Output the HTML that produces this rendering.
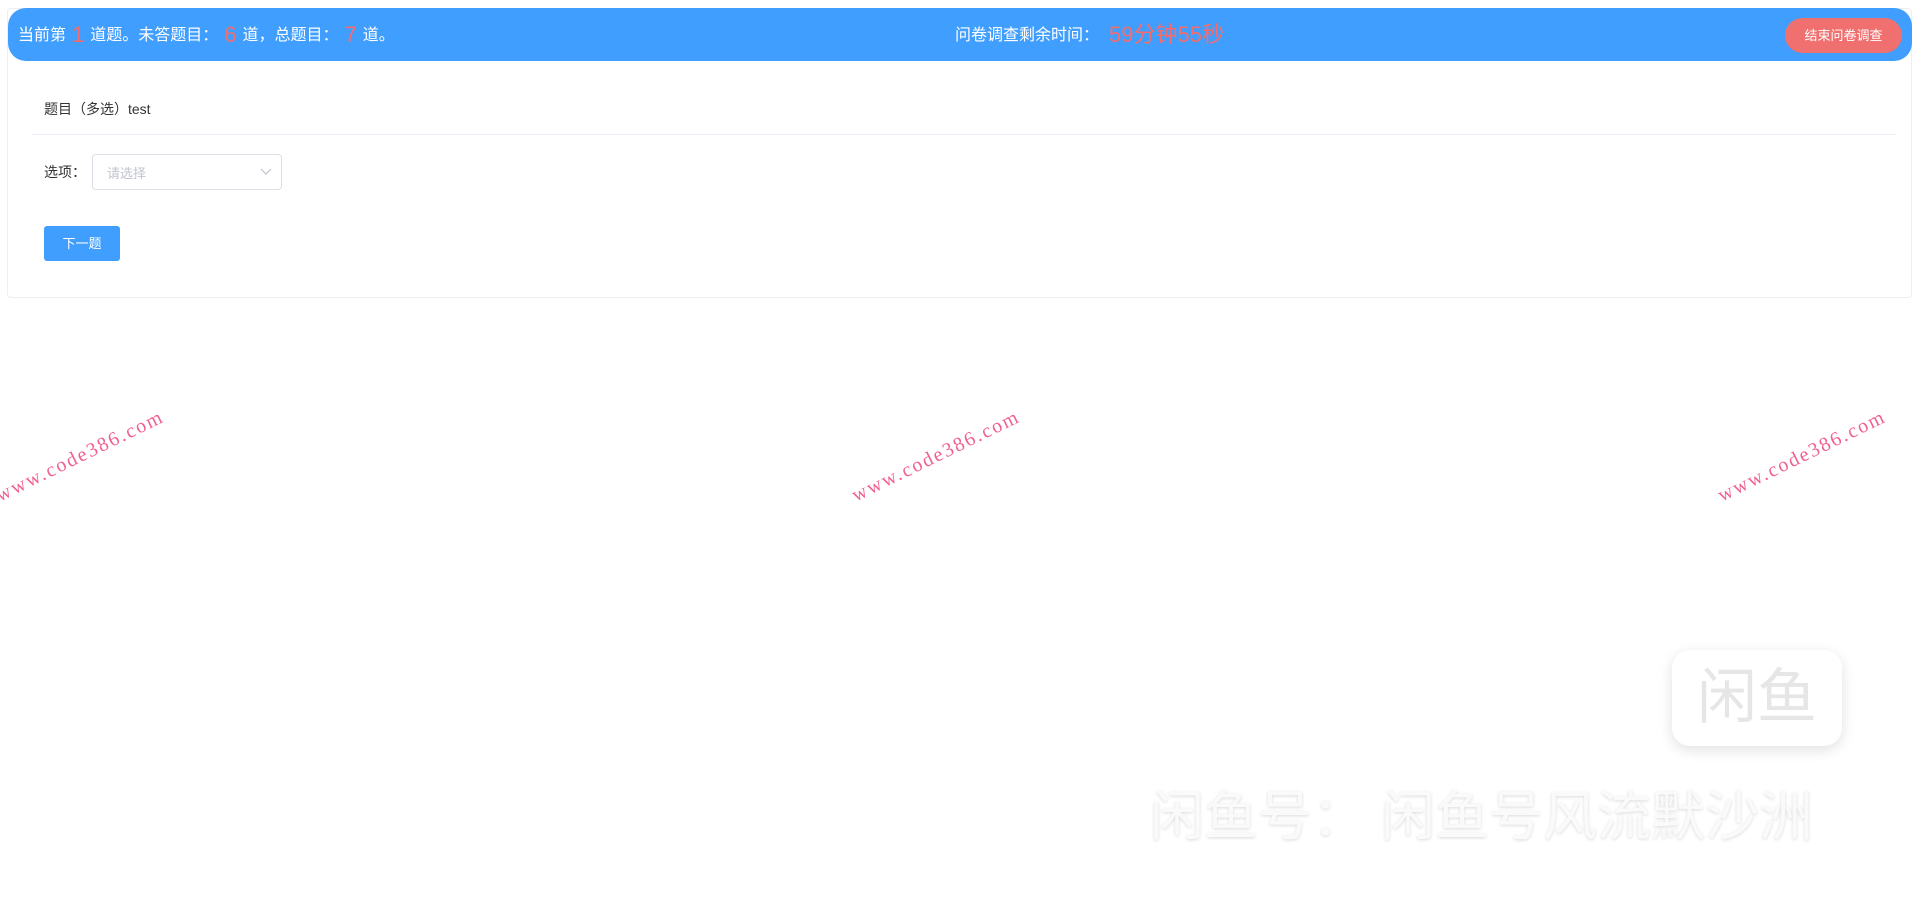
<!DOCTYPE html>
<html><head><meta charset="utf-8"><style>
body{margin:0;width:1920px;height:916px;background:#fff;position:relative;overflow:hidden;font-family:"Liberation Sans","Noto Sans CJK SC",sans-serif;}
.card{position:absolute;left:7px;top:8px;width:1905px;height:290px;border:1px solid #eceff0;border-radius:4px;box-sizing:border-box;}
.head{position:absolute;left:8px;top:8px;width:1904px;height:53px;background:#409eff;border-radius:18px;color:#fff;font-size:16px;}
.head .l{position:absolute;left:10px;top:16px;line-height:22px;}
.r{color:#f56c6c;font-size:22px;margin:0 6px;vertical-align:-2px;}
.head .m{position:absolute;left:947px;top:16px;line-height:22px;}
.btnr{position:absolute;left:1777px;top:10px;width:117px;height:35px;border-radius:18px;background:#f07070;font-size:13px;text-align:center;line-height:35px;}
.q{position:absolute;left:44px;top:99px;font-size:14px;color:#333;}
.hr{position:absolute;left:32px;top:134px;width:1864px;height:1px;background:#ebeef5;}
.lab{position:absolute;left:44px;top:162px;font-size:14px;color:#333;}
.sel{position:absolute;left:92px;top:154px;width:190px;height:36px;border:1px solid #dcdfe6;border-radius:4px;box-sizing:border-box;font-size:13px;color:#c0c4cc;padding:8px 14px;}
.sel svg{position:absolute;right:9px;top:13px;}
.next{position:absolute;left:44px;top:226px;width:76px;height:35px;background:#409eff;border-radius:3px;color:#fff;font-size:13px;text-align:center;line-height:35px;}
.wm{position:absolute;color:#f06090;font-family:"Liberation Serif",serif;font-size:20px;letter-spacing:2px;transform:rotate(-26deg);white-space:nowrap;}
.logo{position:absolute;left:1672px;top:650px;width:170px;height:96px;border-radius:18px;background:#fff;box-shadow:0 4px 14px rgba(0,0,0,.12);font-size:60px;color:#e6e6e6;text-align:center;line-height:96px;}
.xy{position:absolute;left:1150px;top:772px;font-size:54px;color:#fafafa;text-shadow:0 1px 3px rgba(0,0,0,.15);white-space:nowrap;}
</style></head><body>
<div class="card"></div>
<div class="head">
<div class="l">当前第<span class="r">1</span>道题。未答题目：<span class="r">6</span>道，总题目：<span class="r">7</span>道。</div>
<div class="m">问卷调查剩余时间：<span class="r" style="margin-left:10px">59分钟55秒</span></div>
<div class="btnr">结束问卷调查</div>
</div>
<div class="q">题目（多选）test</div>
<div class="hr"></div>
<div class="lab">选项：</div>
<div class="sel">请选择<svg width="12" height="8" viewBox="0 0 12 8"><path d="M1 1l5 5 5-5" fill="none" stroke="#c0c4cc" stroke-width="1.2"/></svg></div>
<div class="next">下一题</div>
<div class="wm" style="left:-12px;top:445px">www.code386.com</div>
<div class="wm" style="left:844px;top:445px">www.code386.com</div>
<div class="wm" style="left:1710px;top:445px">www.code386.com</div>
<div class="logo">闲鱼</div>
<div class="xy">闲鱼号： 闲鱼号风流默沙洲</div>
</body></html>
